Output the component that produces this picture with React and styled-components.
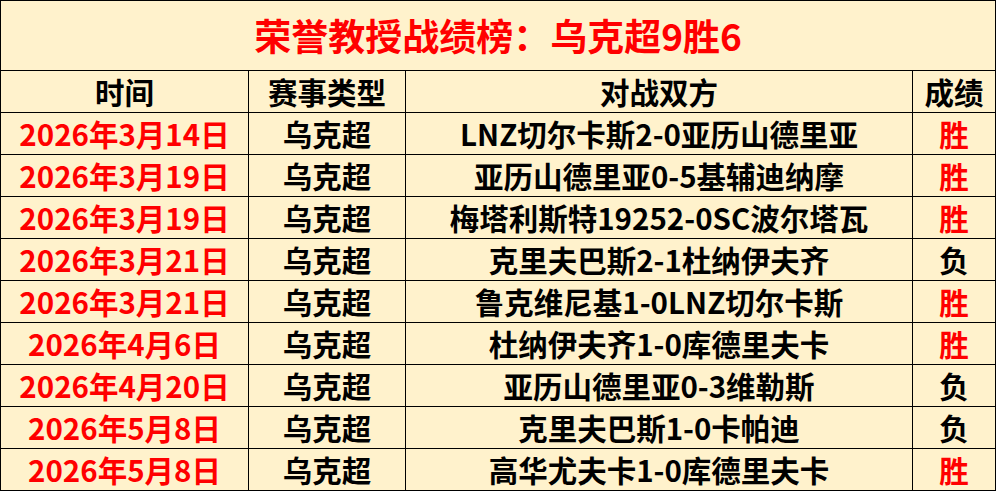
import styled, { createGlobalStyle } from "styled-components";

const GlobalStyle = createGlobalStyle`
  html, body {
    margin: 0;
    padding: 0;
    background: #fff2cc;
  }
  body {
    font-family: "Noto Sans CJK SC", "Noto Sans", sans-serif;
  }
`;

const Board = styled.table`
  border-collapse: collapse;
  table-layout: fixed;
  width: 995px;
  background: #fff2cc;
  font-weight: 700;
  color: #000;
`;

const TitleCell = styled.th`
  height: 69px;
  padding: 0;
  border: 1px solid #000;
  color: #ff0000;
  font-size: 37px;
  font-weight: 700;
  line-height: 1;
  text-align: center;
`;

const Cell = styled.td`
  height: 41px;
  padding: 0;
  border: 1px solid #000;
  font-size: 29.5px;
  line-height: 1;
  text-align: center;
  white-space: nowrap;
  color: ${(p) => (p.$red ? "#ff0000" : "#000")};
`;

const matches = [
  { date: "2026年3月14日", teams: "LNZ切尔卡斯2-0亚历山德里亚", result: "胜" },
  { date: "2026年3月19日", teams: "亚历山德里亚0-5基辅迪纳摩", result: "胜" },
  { date: "2026年3月19日", teams: "梅塔利斯特19252-0SC波尔塔瓦", result: "胜" },
  { date: "2026年3月21日", teams: "克里夫巴斯2-1杜纳伊夫齐", result: "负" },
  { date: "2026年3月21日", teams: "鲁克维尼基1-0LNZ切尔卡斯", result: "胜" },
  { date: "2026年4月6日", teams: "杜纳伊夫齐1-0库德里夫卡", result: "胜" },
  { date: "2026年4月20日", teams: "亚历山德里亚0-3维勒斯", result: "负" },
  { date: "2026年5月8日", teams: "克里夫巴斯1-0卡帕迪", result: "负" },
  { date: "2026年5月8日", teams: "高华尤夫卡1-0库德里夫卡", result: "胜" },
];

export default function App() {
  return (
    <>
      <GlobalStyle />
      <Board>
        <colgroup>
          <col style={{ width: 248 }} />
          <col style={{ width: 157 }} />
          <col style={{ width: 507 }} />
          <col style={{ width: 83 }} />
        </colgroup>
        <thead>
          <tr>
            <TitleCell colSpan={4}>荣誉教授战绩榜：乌克超9胜6</TitleCell>
          </tr>
        </thead>
        <tbody>
          <tr>
            <Cell>时间</Cell>
            <Cell>赛事类型</Cell>
            <Cell>对战双方</Cell>
            <Cell>成绩</Cell>
          </tr>
          {matches.map((m, i) => (
            <tr key={i}>
              <Cell $red>{m.date}</Cell>
              <Cell>乌克超</Cell>
              <Cell>{m.teams}</Cell>
              <Cell $red={m.result === "胜"}>{m.result}</Cell>
            </tr>
          ))}
        </tbody>
      </Board>
    </>
  );
}
